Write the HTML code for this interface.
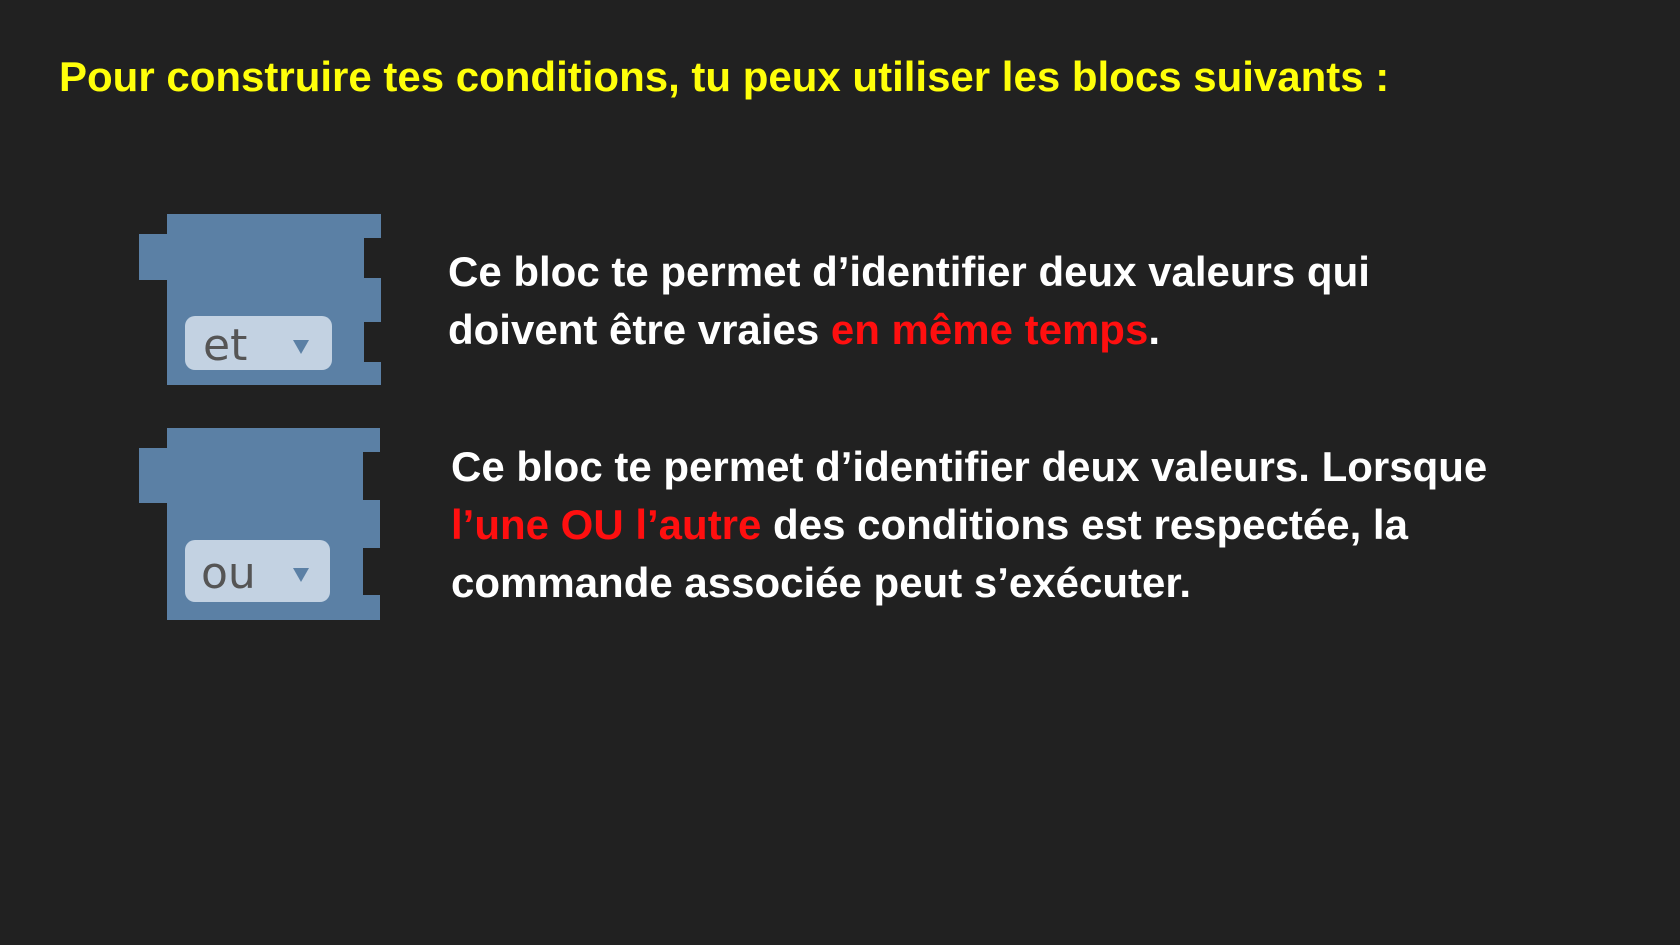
<!DOCTYPE html>
<html><head><meta charset="utf-8"><style>
body{margin:0;width:1680px;height:945px;background:#212121;overflow:hidden;position:relative;font-family:"Liberation Sans",Arial,sans-serif;font-weight:bold}
.t{position:absolute;white-space:nowrap;font-size:42px;color:#fff;line-height:58px}
.r{color:#ff0f0f}
.dd{position:absolute;background:#c3d2e2;border-radius:10px;color:#555;font-weight:normal;font-family:"DejaVu Sans",sans-serif;font-size:44px}
.dd span{position:absolute}
.tri{position:absolute;width:0;height:0;border-left:8px solid transparent;border-right:8px solid transparent;border-top:14px solid #5b80a5}
</style></head><body>
<div class="t" style="left:59px;top:48px;color:#ffff0a;">Pour construire tes conditions, tu peux utiliser les blocs suivants :</div>

<svg width="1680" height="945" style="position:absolute;left:0;top:0">
<path fill="#5b80a5" d="M167 214 H381 V238 H364 V278 H381 V322 H364 V362 H381 V385 H167 V280 H139 V234 H167 Z"/>
<path fill="#5b80a5" d="M167 428 H380 V452 H363 V500 H380 V548 H363 V595 H380 V620 H167 V503 H139 V448 H167 Z"/>
</svg>
<div class="dd" style="left:185px;top:316px;width:147px;height:54px"><span style="left:18px;top:4px">et</span><div class="tri" style="left:108px;top:24px"></div></div>
<div class="dd" style="left:185px;top:540px;width:145px;height:62px"><span style="left:16px;top:8px">ou</span><div class="tri" style="left:108px;top:28px"></div></div>

<div class="t" style="left:448px;top:243px">Ce bloc te permet d’identifier deux valeurs qui<br>doivent être vraies <span class="r">en même temps</span>.</div>
<div class="t" style="left:451px;top:438px">Ce bloc te permet d’identifier deux valeurs. Lorsque<br><span class="r">l’une OU l’autre</span> des conditions est respectée, la<br>commande associée peut s’exécuter.</div>
</body></html>
